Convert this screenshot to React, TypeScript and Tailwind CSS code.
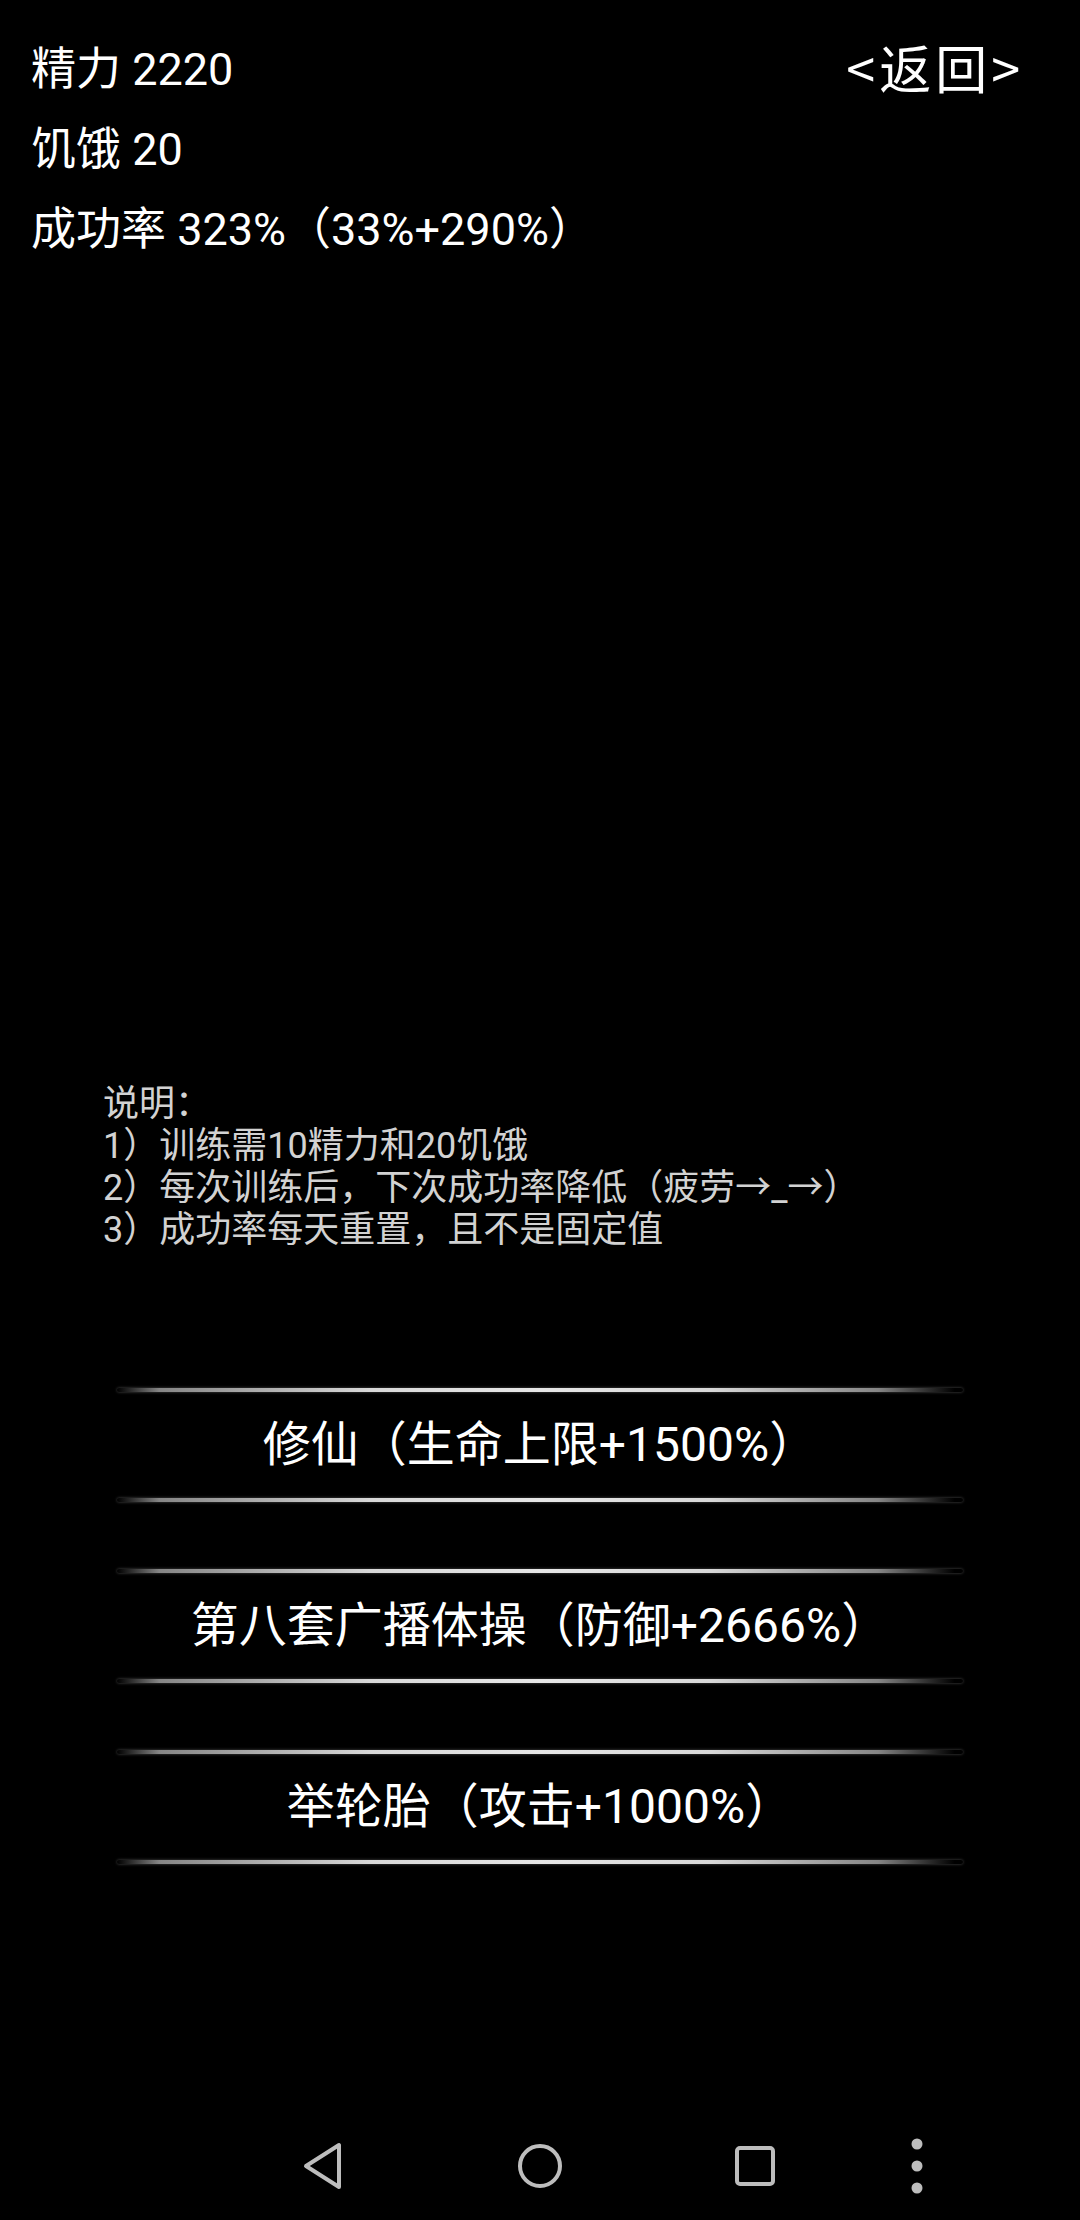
import React from "react";

const font = "font-['Roboto','Noto_Sans_CJK_SC',sans-serif]";

function Line() {
  return (
    <div className="h-[4px] w-full rounded-full bg-[linear-gradient(to_right,rgba(255,255,255,0)_0%,rgba(190,190,190,0.7)_5%,#d8d8d8_30%,#e6e6e6_50%,#d8d8d8_70%,rgba(190,190,190,0.7)_90%,rgba(255,255,255,0)_99%)] shadow-[0_0_3px_rgba(160,160,160,0.5)]" />
  );
}

function TrainButton({ label }: { label: string }) {
  return (
    <div className="flex h-[114px] w-[846px] flex-col justify-between">
      <Line />
      <div className="flex flex-1 items-center justify-center text-[48px] leading-none text-white">
        {label}
      </div>
      <Line />
    </div>
  );
}

export default function App() {
  return (
    <div className={`flex h-[2220px] w-[1080px] flex-col bg-black ${font}`}>
      <div className="flex-1">
        <div className="flex justify-between pl-[31px] pr-[56px] pt-[27px]">
          <div className="mt-[3px] flex flex-col text-[45px] leading-[80px] text-white">
            <div>精力 2220</div>
            <div>饥饿 20</div>
            <div>成功率 323%（33%+290%）</div>
          </div>
          <div className="font-['Noto_Sans_CJK_SC',sans-serif] text-[52px] leading-[80px] tracking-[4px] text-white">
            &lt;返回&gt;
          </div>
        </div>

        <div className="ml-[103px] mt-[813px] flex flex-col text-[36px] leading-[42px] text-[#d2d2d2]">
          <div>说明：</div>
          <div>1）训练需10精力和20饥饿</div>
          <div>2）每次训练后，下次成功率降低（疲劳→_→）</div>
          <div>3）成功率每天重置，且不是固定值</div>
        </div>

        <div className="ml-[117px] mt-[137px] flex flex-col gap-[67px]">
          <TrainButton label="修仙（生命上限+1500%）" />
          <TrainButton label="第八套广播体操（防御+2666%）" />
          <TrainButton label="举轮胎（攻击+1000%）" />
        </div>
      </div>

      <div className="flex h-[108px] items-center pl-[293px]">
        <div className="flex h-[60px] w-[60px] items-center justify-center">
          <svg width="46" height="50" viewBox="0 0 46 50" fill="none">
            <path
              d="M6 25 L39 4 L39 46 Z"
              stroke="#bdbdbd"
              strokeWidth="4"
              strokeLinejoin="round"
            />
          </svg>
        </div>
        <div className="ml-[157px] flex h-[60px] w-[60px] items-center justify-center">
          <svg width="48" height="48" viewBox="0 0 48 48" fill="none">
            <circle cx="24" cy="24" r="20" stroke="#bdbdbd" strokeWidth="4" />
          </svg>
        </div>
        <div className="ml-[155px] flex h-[60px] w-[60px] items-center justify-center">
          <svg width="44" height="44" viewBox="0 0 44 44" fill="none">
            <rect x="4" y="4" width="36" height="36" rx="3" stroke="#bdbdbd" strokeWidth="4" />
          </svg>
        </div>
        <div className="ml-[102px] flex h-[60px] w-[60px] items-center justify-center">
          <svg width="14" height="56" viewBox="0 0 14 56" fill="#bdbdbd">
            <circle cx="7" cy="6" r="5.5" />
            <circle cx="7" cy="28" r="5.5" />
            <circle cx="7" cy="50" r="5.5" />
          </svg>
        </div>
      </div>
    </div>
  );
}
